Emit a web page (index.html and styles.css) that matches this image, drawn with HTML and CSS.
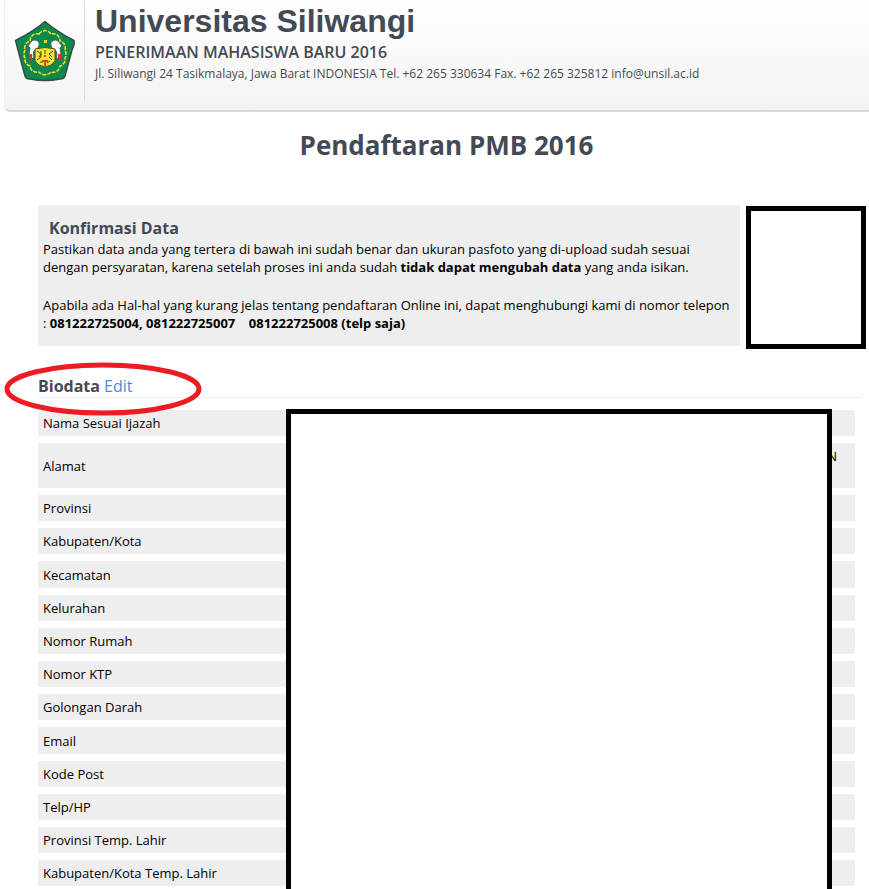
FILE: index.html
```html
<!DOCTYPE html>
<html lang="id">

<head>
    <meta charset="UTF-8">
    <meta name="viewport" content="width=device-width, initial-scale=1.0">
    <title>Pendaftaran PMB 2016</title>
    <link rel="stylesheet" href="styles.css">
</head>

<body>
    <header class="header">
        <div class="logo">
            <svg width="62" height="62" viewBox="0 0 62 62" role="img" aria-label="Universitas Siliwangi">
                <path d="M31 1.500Q42 11 60 20.500Q61 24 58 30L51 56Q50 59 46 59Q31 62 16 59Q12 59 11 56L4 30L1.500 20.500Q20 11 31 1.500Z" fill="#0b8a4f" stroke="#3d4a42" stroke-width="1.500"/>
                <path d="M25 14a7 7 0 0 1 12 0a7 7 0 0 1 9 7a7 7 0 0 1 5 9a8 8 0 0 1 0 8a7 7 0 0 1-5 8a7 7 0 0 1-9 6a8 8 0 0 1-12 0a7 7 0 0 1-9-6a7 7 0 0 1-5-8a8 8 0 0 1 0-8a7 7 0 0 1 5-9a7 7 0 0 1 9-7z" fill="none" stroke="#26502f" stroke-width="1"/>
                <path d="M25 14a7 7 0 0 1 12 0a7 7 0 0 1 9 7a7 7 0 0 1 5 9a8 8 0 0 1 0 8a7 7 0 0 1-5 8a7 7 0 0 1-9 6a8 8 0 0 1-12 0a7 7 0 0 1-9-6a7 7 0 0 1-5-8a8 8 0 0 1 0-8a7 7 0 0 1 5-9a7 7 0 0 1 9-7z" fill="none" stroke="#f2e52d" stroke-width="1.500" stroke-dasharray="4 1"/>
                <path d="M25 22q-5-4-8 0l-3 4 2 2-1 6 3 4 2 1q-2-7 1-9 5-2 4-8zM37 22q5-4 8 0l3 4-2 2 1 6-3 4-2 1q2-7-1-9-5-2-4-8z" fill="#fff" stroke="#49615a" stroke-width="1"/>
                <path d="M15 34h3v5h-3zM44 34h3v5h-3z" fill="#e3342b"/>
                <path d="M30 20h3v3h-3z" fill="#f0da2e"/>
                <path d="M21 29q10-3 20 0v12q-3 5-10 6-7-1-10-6z" fill="#f2e52d" stroke="#4f5126" stroke-width="1"/>
                <path d="M23 31l4 3-2 3M39 31l-4 3 3 3M27 31v6l-4 3M31 30v4M35 37l3 3M26 42h3M33 43l3-2" fill="none" stroke="#464722" stroke-width="1"/>
                <path d="M30 35h2v2h-2zM28 40h6v2h-2v4h-2v-4h-2z" fill="#e94129"/>
            </svg>
        </div>
        <div class="identity">
            <div class="univ-name">Universitas Siliwangi</div>
            <div class="univ-sub">PENERIMAAN MAHASISWA BARU 2016</div>
            <div class="univ-address">Jl. Siliwangi 24 Tasikmalaya, Jawa Barat INDONESIA Tel. +62 265 330634 Fax. +62 265 325812 info@unsil.ac.id</div>
        </div>
    </header>

    <main class="content">
        <h1>Pendaftaran PMB 2016</h1>

        <div class="confirm">
            <section class="panel">
                <h2>Konfirmasi Data</h2>
                <p>Pastikan data anda yang tertera di bawah ini sudah benar dan ukuran pasfoto yang di-upload sudah sesuai dengan persyaratan, karena setelah proses ini anda sudah <b>tidak dapat mengubah data</b> yang anda isikan.</p>
                <p>Apabila ada Hal-hal yang kurang jelas tentang pendaftaran Online ini, dapat menghubungi kami di nomor telepon : <b>081222725004, 081222725007 &nbsp;&nbsp; 081222725008 (telp saja)</b></p>
            </section>
            <div class="photo"></div>
        </div>

        <div class="section-title">
            <h3>Biodata <a href="#edit">Edit</a></h3>
            <svg class="marker" width="198" height="54" viewBox="0 0 198 54" aria-hidden="true">
                <ellipse cx="99" cy="27" rx="96" ry="24" fill="none" stroke="#ed1c24" stroke-width="5"/>
            </svg>
        </div>

        <div class="biodata">
            <table>
                <tr><th scope="row">Nama Sesuai Ijazah</th><td></td></tr>
                <tr class="tall"><th scope="row">Alamat</th><td>N</td></tr>
                <tr><th scope="row">Provinsi</th><td></td></tr>
                <tr><th scope="row">Kabupaten/Kota</th><td></td></tr>
                <tr><th scope="row">Kecamatan</th><td></td></tr>
                <tr><th scope="row">Kelurahan</th><td></td></tr>
                <tr><th scope="row">Nomor Rumah</th><td></td></tr>
                <tr><th scope="row">Nomor KTP</th><td></td></tr>
                <tr><th scope="row">Golongan Darah</th><td></td></tr>
                <tr><th scope="row">Email</th><td></td></tr>
                <tr><th scope="row">Kode Post</th><td></td></tr>
                <tr><th scope="row">Telp/HP</th><td></td></tr>
                <tr><th scope="row">Provinsi Temp. Lahir</th><td></td></tr>
                <tr><th scope="row">Kabupaten/Kota Temp. Lahir</th><td></td></tr>
            </table>
            <div class="cover"></div>
        </div>
    </main>
</body>

</html>
```
FILE: styles.css
```css
body {
    margin: 0;
    background-color: #fff;
    color: #000;
    font-family: "Open Sans", "Noto Sans", sans-serif;
    font-size: 13px;
    line-height: 18px;
}

h1, h2, h3, p {
    margin: 0;
}

.header {
    display: flex;
    margin-left: 4px;
    height: 110px;
    background: linear-gradient(#fff, #f3f3f3);
    border-left: 1px solid #eee;
    border-bottom: 2px solid #dadada;
    border-bottom-left-radius: 6px;
    color: #434a54;
}

.logo {
    width: 79px;
    height: 81px;
    padding-top: 20px;
    border-right: 1px solid #ddd;
    text-align: center;
}

.identity {
    padding-left: 10px;
}

.univ-name {
    font-family: "Liberation Sans", Arial, sans-serif;
    font-size: 32px;
    font-weight: bold;
    line-height: 42px;
}

.univ-sub {
    font-size: 16px;
    font-weight: 600;
    line-height: 20px;
    padding-bottom: 3px;
}

.univ-address {
    font-size: 12px;
}

.content {
    padding: 0 3px 0 38px;
}

h1 {
    padding: 15px 11px 41px 0;
    color: #434a54;
    font-size: 26px;
    line-height: 37px;
    text-align: center;
}

.confirm {
    display: flex;
    gap: 6px;
}

.panel {
    flex: 1;
    height: 128px;
    padding: 13px 5px 0;
    background-color: #eee;
}

.panel h2 {
    padding: 0 0 2px 6px;
    color: #434a54;
    font-size: 16px;
    line-height: 20px;
}

.panel p + p {
    margin-top: 20px;
}

.photo {
    width: 110px;
    height: 133px;
    margin-top: 1px;
    border: 5px solid #000;
    background-color: #fff;
}

.section-title {
    position: relative;
    margin: 25px 4px 12px 0;
    border-bottom: 1px solid #eee;
}

.section-title h3 {
    padding-top: 1px;
    color: #434a54;
    font-size: 16px;
    line-height: 22px;
}

.section-title a {
    color: #4a89dc;
    font-weight: normal;
    text-decoration: none;
}

/* red ellipse drawn over the heading */
.marker {
    position: absolute;
    left: -34px;
    top: -12px;
    z-index: 2;
}

.biodata {
    position: relative;
    margin: -7px 11px 0 0;
    padding-bottom: 2px;
    overflow: hidden;
}

table {
    width: 100%;
    margin-bottom: -6px;
    border-collapse: separate;
    border-spacing: 0 7px;
}

tr {
    height: 26px;
    background-color: #eee;
}

tr:nth-child(5n) {
    height: 27px;
}

.tall {
    height: 45px;
}

th,
td {
    padding: 4px 5px;
    font-weight: normal;
    text-align: left;
}

th {
    width: 238px;
}

td {
    padding-right: 18px;
    text-align: right;
    vertical-align: top;
}

.cover {
    position: absolute;
    top: 6px;
    right: 23px;
    bottom: 0;
    left: 248px;
    border: 5px solid #000;
    border-bottom: 0;
    background-color: #fff;
}
```
